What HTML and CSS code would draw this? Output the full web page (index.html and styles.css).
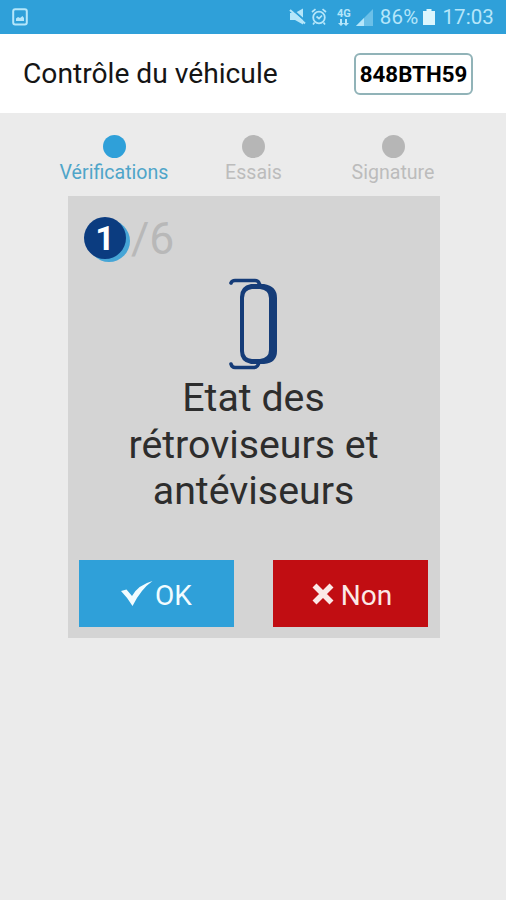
FILE: index.html
```html
<!DOCTYPE html>
<html lang="fr">
<head>
  <meta charset="UTF-8" />
  <meta name="viewport" content="width=device-width, initial-scale=1" />
  <title>Contrôle du véhicule</title>
  <link rel="stylesheet" href="styles.css">
</head>
<body>

  <!-- Status bar -->
  <div class="status-bar">
    <svg class="picture-icon" width="16" height="18" viewBox="0 0 16 18">
      <rect x="1.2" y="1.2" width="13.6" height="15.4" rx="2" fill="none" stroke="currentColor" stroke-width="2" />
      <path d="M4 13V10.500L6 9L8 10L10.500 8L12 10V13Z" fill="currentColor" />
    </svg>
    <div class="status-icons">
      <svg width="17" height="18" viewBox="0 0 17 18">
        <path d="M1 5H6L14 0.500V16.500L6 12H1Z" fill="currentColor" />
        <path d="M2 0.500L17 13.500" stroke="#2fa0d9" stroke-width="2" />
        <path d="M1 2L16 15.500" stroke="currentColor" stroke-width="2" />
      </svg>
      <svg class="alarm-icon" width="16" height="18" viewBox="0 0 16 18">
        <circle cx="8" cy="9.500" r="5.800" fill="none" stroke="currentColor" stroke-width="1.800" />
        <path d="M1 4L4.500 1.200M15 4L11.500 1.200M3.500 14.500L2 16.500M12.500 14.500L14 16.500M5.500 8.500L8 10.500L11 7.500" fill="none" stroke="currentColor" stroke-width="1.700" />
      </svg>
      <div class="network">
        <span>4G</span>
        <svg width="11" height="7" viewBox="0 0 11 7">
          <path d="M2 0H4V4H6L3 7L0 4H2ZM7 0H9V4H11L8 7L5 4H7Z" fill="currentColor" />
        </svg>
      </div>
      <svg class="signal-icon" width="17" height="17" viewBox="0 0 17 17">
        <path d="M0 17L17 0V17Z" fill="currentColor" opacity="0.450" />
        <path d="M0 17L8 9V17Z" fill="currentColor" />
      </svg>
      <span class="battery-level">86%</span>
      <svg class="battery-icon" width="12" height="16" viewBox="0 0 12 16">
        <path d="M3.500 0H8.500V2H12V16H0V2H3.500Z" fill="#dcf6fd" />
      </svg>
      <span class="clock">17:03</span>
    </div>
  </div>

  <!-- Header -->
  <div class="header">
    <h1>Contrôle du véhicule</h1>
    <div class="plate">848BTH59</div>
  </div>

  <div class="container">
    <div class="steps">
      <div class="step active">
        <div class="dot"></div>
        <div class="step-label">Vérifications</div>
      </div>
      <div class="step">
        <div class="dot"></div>
        <div class="step-label">Essais</div>
      </div>
      <div class="step">
        <div class="dot"></div>
        <div class="step-label">Signature</div>
      </div>
    </div>

    <!-- Current question -->
    <div class="card">
      <div class="counter">
        <div class="current">1</div>
        <div class="total">/6</div>
      </div>

      <svg class="mirror-icon" width="50" height="92" viewBox="0 0 50 92">
        <path fill-rule="evenodd" d="M22 6H35Q48 8 48 20V73Q48 85 35 86H22Q11 84 11 73V19Q11 8 22 6ZM23 11Q15 12 15 20V73Q15 80 23 81H31Q40 80 40 72V20Q40 12 31 11Z" fill="#153c78" />
        <path d="M2 5Q3 2.500 6 2.500H26Q29 2.500 30 5L32 9M2 86Q3 89.500 6 89.500H25Q29 89.500 30 84" fill="none" stroke="#153c78" stroke-width="3.600" stroke-linecap="round" />
      </svg>

      <h2>Etat des rétroviseurs et antéviseurs</h2>

      <div class="button-container">
        <button class="ok">
          <svg width="32" height="26" viewBox="0 0 32 26">
            <path d="M0 10L5.500 8.500L11 15Q17 4 31.500 0Q20 8 11.500 25Q6 16 0 10Z" fill="currentColor" />
          </svg>
          <span>OK</span>
        </button>
        <button class="no">
          <svg width="22" height="22" viewBox="0 0 22 22">
            <path d="M2.500 2.500L19.500 19.500M19.500 2.500L2.500 19.500" stroke="currentColor" stroke-width="5.600" />
          </svg>
          <span>Non</span>
        </button>
      </div>
    </div>
  </div>

</body>
</html>
```

FILE: styles.css
```css
body {
  font-family: Roboto, "Liberation Sans", sans-serif;
  background-color: #ebebeb;
  margin: 0;
  padding: 0;
  min-height: 100vh;
}

h1, h2 {
  margin: 0;
  font-weight: normal;
}

.status-bar {
  display: flex;
  justify-content: space-between;
  align-items: center;
  height: 34px;
  padding: 0 12px;
  box-sizing: border-box;
  background-color: #2fa0d9;
  color: #b5e6fa;
}

.status-icons {
  display: flex;
  align-items: center;
  font-size: 20.5px;
}

.alarm-icon {
  margin-left: 5px;
}

.network {
  display: flex;
  flex-direction: column;
  align-items: center;
  margin-left: 10px;
  font-size: 11px;
  font-weight: bold;
  line-height: 10px;
}

.signal-icon {
  margin-left: 5px;
}

.battery-level {
  margin-left: 7px;
  letter-spacing: 0.2px;
}

.battery-icon {
  margin: 0 7px 0 5px;
}

.clock {
  letter-spacing: 0.1px;
}

.header {
  display: flex;
  justify-content: space-between;
  align-items: center;
  height: 79px;
  padding: 0 33px 0 23px;
  box-sizing: border-box;
  background-color: #fff;
}

h1 {
  font-size: 28.200px;
  color: #151515;
}

.plate {
  width: 119px;
  height: 42px;
  box-sizing: border-box;
  border: 2px solid #91b3b8;
  border-radius: 6px;
  font-size: 22.300px;
  font-weight: bold;
  line-height: 39px;
  text-align: center;
  color: #000;
}

.container {
  width: 372px;
  margin: 0 auto 0 68px;
  padding-top: 22px;
}

.steps {
  display: flex;
  justify-content: space-between;
  height: 61px;
  margin: 0 -22px 0 -23px;
}

.step {
  display: flex;
  flex-direction: column;
  align-items: center;
  width: 138px;
  color: #bcbcbc;
}

.dot {
  width: 23px;
  height: 23px;
  border-radius: 50%;
  background-color: #b6b6b6;
}

.step-label {
  margin-top: 3px;
  font-size: 19.600px;
  line-height: 23px;
}

.step.active {
  color: #4fa5c9;
}

.step.active .dot {
  background-color: #2fa0d9;
}

.card {
  display: flex;
  flex-direction: column;
  height: 442px;
  padding: 20px 12px 11px 11px;
  box-sizing: border-box;
  background-color: #d4d4d4;
}

.counter {
  display: flex;
  align-items: center;
  height: 46px;
  margin-left: 5px;
}

.current {
  width: 42px;
  height: 42px;
  margin-bottom: 3px;
  border-radius: 50%;
  background-color: #0b3c80;
  box-shadow: 4px 3px 0 #46a5d6;
  font-size: 34px;
  font-weight: bold;
  line-height: 43px;
  text-align: center;
  color: #fff;
}

.total {
  margin-left: 5px;
  font-size: 44.500px;
  color: #b8b8b8;
}

.mirror-icon {
  margin: 16px 0 0 150px;
}

h2 {
  width: 270px;
  margin: 5px auto 0;
  font-size: 39.300px;
  line-height: 46.500px;
  text-align: center;
  color: #2d2d2d;
}

.button-container {
  display: flex;
  justify-content: space-between;
  margin-top: auto;
}

button {
  display: flex;
  justify-content: center;
  align-items: center;
  width: 155px;
  height: 67px;
  padding: 3px 0 0;
  border: none;
  font-family: inherit;
  font-size: 28px;
  color: #f2fcff;
  cursor: pointer;
}

button svg {
  margin-bottom: 2px;
}

.ok {
  gap: 2px;
  background-color: #2fa0d9;
}

.no {
  gap: 7px;
  padding-left: 3px;
  background-color: #c10d12;
  color: #fbe9e7;
}
```
